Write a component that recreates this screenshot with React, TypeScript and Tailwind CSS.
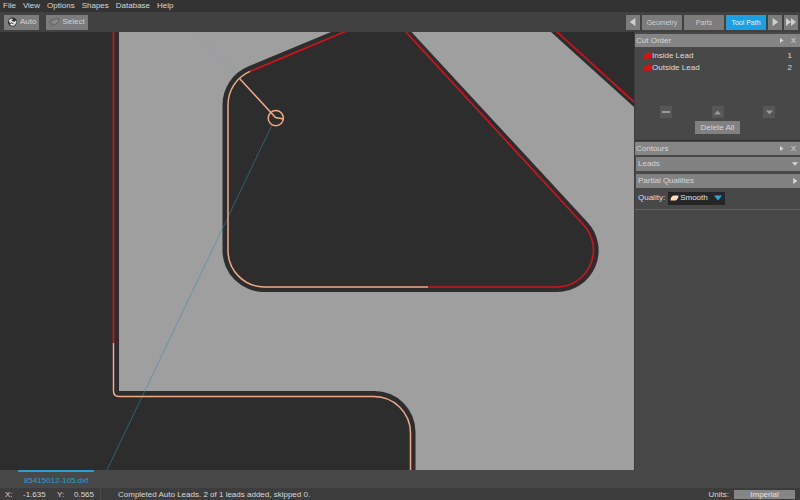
import type { ReactNode } from "react";

const menus = ["File", "View", "Options", "Shapes", "Database", "Help"] as const;

const tabs = [
  { label: "Geometry", active: false },
  { label: "Parts", active: false },
  { label: "Tool Path", active: true }
] as const;

const cutOrder = [
  { label: "Inside Lead", order: 1 },
  { label: "Outside Lead", order: 2 }
] as const;

function AutoIcon() {
  return (
    <svg viewBox="0 0 10 10" className="h-[10px] w-[11px]" aria-hidden="true">
      <circle cx="5" cy="5" r="4.6" fill="#303436" />
      <path d="M1.2 3.6 3.4 1.6l2 .6L4.4 4l2.2.8 2-1.2.4 2-2 2.8-3 .4L2.2 7l2-.6L2 5.4z" fill="#e2e2e2" />
      <path d="M4.2 3.4h2.4M3.4 5.6l2.6 1.2" stroke="#303436" strokeWidth="0.9" />
    </svg>
  );
}

function SelectIcon() {
  return (
    <svg viewBox="0 0 11 10" className="h-[10px] w-[11px]" aria-hidden="true">
      <path
        d="M.5 4.5 3 2.5 10 1.5 9 5 4.5 8.500 2 7z"
        fill="none"
        stroke="#454545"
        strokeWidth="0.9"
        strokeDasharray="1.2 1"
      />
      <path d="M4 6 7.5 3M6.500 6.500 9 3" stroke="#b4b4b4" strokeWidth="0.6" />
    </svg>
  );
}

function Triangle({ dir, className }: { dir: "left" | "right" | "up" | "down"; className: string }) {
  const points = {
    left: "8,0 8,10 1,5",
    right: "2,0 2,10 9,5",
    up: "0,8 10,8 5,2",
    down: "0,2 10,2 5,8"
  };
  return (
    <svg viewBox="0 0 10 10" className={className} aria-hidden="true">
      <polygon points={points[dir]} fill="currentColor" />
    </svg>
  );
}

function ToolButton({ icon, children }: { icon: ReactNode; children: ReactNode }) {
  return (
    <button type="button" className="flex h-[15px] items-center gap-0.5 bg-[#7c7c7c] px-[3px] text-[#d2d2d2]">
      {icon}
      {children}
    </button>
  );
}

function PanelHeader({ title }: { title: string }) {
  return (
    <header className="flex h-[13px] items-center bg-[#858585] pr-1 pl-px text-[#d6d6d6]">
      <h2 className="flex-1">{title}</h2>
      <button type="button" aria-label={`Detach ${title}`} className="mr-[7px]">
        <Triangle dir="right" className="size-[5px]" />
      </button>
      <button type="button" aria-label={`Close ${title}`}>
        X
      </button>
    </header>
  );
}

function SectionBar({ title, open }: { title: string; open: boolean }) {
  return (
    <button
      type="button"
      className="ml-px flex h-[14px] items-center justify-between bg-[#828282] pr-0.5 pl-0.5 text-[#d6d6d6]"
    >
      {title}
      <Triangle dir={open ? "down" : "right"} className="size-[6px]" />
    </button>
  );
}

function OrderButton({ label, children }: { label: string; children: ReactNode }) {
  return (
    <button
      type="button"
      aria-label={label}
      className="flex size-3 items-center justify-center bg-[#575757] text-[#9a9a9a]"
    >
      {children}
    </button>
  );
}

function Canvas() {
  return (
    <svg viewBox="0 32 634 438" preserveAspectRatio="xMinYMin slice" className="min-h-0 min-w-0 flex-1 bg-[#2d2d2d]">
      {/* sheet */}
      <path d="M119 32H551L634 107V470H415.5V432A41 41 0 0 0 374.5 391H119Z" fill="#9f9f9f" />
      {/* pocket */}
      <path
        d="M331 32H411.5L587.3 222A41.5 41.5 0 0 1 556.8 292H264A41.5 41.5 0 0 1 222.5 250.5V105A41.5 41.5 0 0 1 248 66.6Z"
        fill="#2d2d2d"
      />
      {/* rapid moves */}
      <g stroke="#2b93a6" fill="none">
        <path d="M272 125 107 470" strokeWidth="0.9" opacity="0.6" />
        <path d="M196 34 240 79" strokeWidth="2" opacity="0.06" />
      </g>
      {/* cut path */}
      <g stroke="#cc141c" strokeWidth="1.7" fill="none">
        <path d="M113.5 32V343" />
        <path d="M250 71.4 346.5 31" />
        <path d="M405 31 583.7 225A37 37 0 0 1 556.8 287H428" />
        <path d="M556 31 634 102" />
      </g>
      {/* auto leads */}
      <g stroke="#f3a986" strokeWidth="1.5" fill="none">
        <path d="M250 71.4A36.5 36.5 0 0 0 228 105V250.5A36.5 36.5 0 0 0 264 287H428" />
        <path d="M113.5 343V391Q113.5 396.5 119 396.5H374A36.5 36.5 0 0 1 410.5 433V470" />
        <path d="M240 79 275.5 117.5 283.5 119" />
        <circle cx="275.8" cy="118.2" r="7.6" />
      </g>
    </svg>
  );
}

function Sidebar() {
  return (
    <aside className="w-[166px] shrink-0 border-l border-[#3c3c3c] bg-[#484848] pt-0.5">
      <section>
        <PanelHeader title="Cut Order" />
        <ol className="pt-[3px] pr-2 pl-2">
          {cutOrder.map((item) => (
            <li key={item.label} className="flex h-3 items-center text-[#dedede]">
              <svg viewBox="0 0 9 8" className="h-2 w-[9px]" aria-hidden="true">
                <path d="M0 7.5 2 1.5 5 .5 9 1 8 5.5 5 7 3 6.5z" fill="#e60c0c" />
              </svg>
              <span className="flex-1">{item.label}</span>
              <span>{item.order}</span>
            </li>
          ))}
        </ol>
        <div className="mt-8 flex justify-between px-[25px]">
          <OrderButton label="Remove">
            <span className="h-0.5 w-2 bg-current" />
          </OrderButton>
          <OrderButton label="Move up">
            <Triangle dir="up" className="size-[7px]" />
          </OrderButton>
          <OrderButton label="Move down">
            <Triangle dir="down" className="size-[7px]" />
          </OrderButton>
        </div>
        <div className="mt-[3px] flex justify-center">
          <button type="button" className="h-[13px] bg-[#818181] px-[6px] text-[#d6d6d6]">
            Delete All
          </button>
        </div>
      </section>

      <section className="mt-[6px] border-t border-[#2e2e2e] pt-px">
        <PanelHeader title="Contours" />
        <div className="flex flex-col gap-[3px] border-b border-[#626262] pt-0.5 pb-0.5">
          <SectionBar title="Leads" open />
          <SectionBar title="Partial Qualities" open={false} />
          <div className="-mt-0.5 flex h-[18px] items-center gap-[3px] pl-[3px] text-[#dedede]">
            <label htmlFor="quality">Quality:</label>
            <div className="relative flex items-center">
              <select
                id="quality"
                defaultValue="Smooth"
                className="h-[13px] w-[57px] appearance-none bg-[#262626] pl-[12px] text-[#e2e2e2]"
              >
                <option>Smooth</option>
              </select>
              <svg
                viewBox="0 0 9 6"
                className="pointer-events-none absolute left-[2px] h-[6px] w-[9px]"
                aria-hidden="true"
              >
                <path d="M.5 5.5Q.5 1.5 3.5.5H8.5Q8.5 4 5.5 5.5Z" fill="#ffd9b8" />
              </svg>
              <Triangle dir="down" className="pointer-events-none absolute right-[3px] size-2 text-[#2ba6d8]" />
            </div>
          </div>
        </div>
      </section>
    </aside>
  );
}

export default function App() {
  return (
    <div className="flex h-screen flex-col overflow-hidden bg-[#414141] font-['Liberation_Sans',Arial,sans-serif] text-[8px] leading-[12px] text-[#d8d8d8]">
      <nav className="flex h-3 shrink-0 items-center gap-[7px] bg-[#333333] px-[3px]">
        {menus.map((menu) => (
          <button key={menu} type="button">
            {menu}
          </button>
        ))}
      </nav>

      <div className="flex h-5 shrink-0 items-center justify-between pr-0.5 pl-1">
        <div className="flex gap-[7px]">
          <ToolButton icon={<AutoIcon />}>Auto</ToolButton>
          <ToolButton icon={<SelectIcon />}>Select</ToolButton>
        </div>
        <div className="flex gap-[2px] text-[7px] text-[#d0d0d0]">
          <button
            type="button"
            aria-label="Previous step"
            className="flex h-[15px] w-[14px] items-center justify-center bg-[#7c7c7c]"
          >
            <Triangle dir="left" className="size-2" />
          </button>
          {tabs.map((tab) => (
            <button
              key={tab.label}
              type="button"
              className={`h-[15px] w-10 pt-0.5 ${tab.active ? "bg-[#1ba1e2] text-[#e8f4fa]" : "bg-[#7c7c7c]"}`}
            >
              {tab.label}
            </button>
          ))}
          <button
            type="button"
            aria-label="Next step"
            className="flex h-[15px] w-[14px] items-center justify-center bg-[#7c7c7c]"
          >
            <Triangle dir="right" className="size-2" />
          </button>
          <button
            type="button"
            aria-label="Last step"
            className="flex h-[15px] w-[14px] items-center justify-center bg-[#7c7c7c]"
          >
            <svg viewBox="0 0 10 8" className="h-2 w-[10px]" aria-hidden="true">
              <path d="M0 0 5 4 0 8ZM5 0 10 4 5 8Z" fill="currentColor" />
            </svg>
          </button>
        </div>
      </div>

      <main className="flex min-h-0 flex-1">
        <Canvas />
        <Sidebar />
      </main>

      <div className="flex h-[18px] shrink-0 bg-[#484848] pl-[18px]">
        <button type="button" className="w-[76px] border-t-2 border-[#2a9fd0] pt-0.5 text-[#2a9fd0]">
          85415012-105.dxf
        </button>
      </div>

      <footer className="flex h-3 shrink-0 items-center bg-[#3c3c3c] pt-px pr-[5px] pl-[5px]">
        <span className="w-[18px]">X:</span>
        <span className="w-[34px]">-1.635</span>
        <span className="w-[17px]">Y:</span>
        <span className="w-[27px] border-r border-[#4c4c4c]">0.565</span>
        <p className="flex-1 pl-[17px]">Completed Auto Leads. 2 of 1 leads added, skipped 0.</p>
        <label htmlFor="units" className="mr-[5px]">
          Units:
        </label>
        <button id="units" type="button" className="h-[9px] w-[61px] bg-[#858585] leading-[9px] text-[#e0e0e0]">
          Imperial
        </button>
      </footer>
    </div>
  );
}
